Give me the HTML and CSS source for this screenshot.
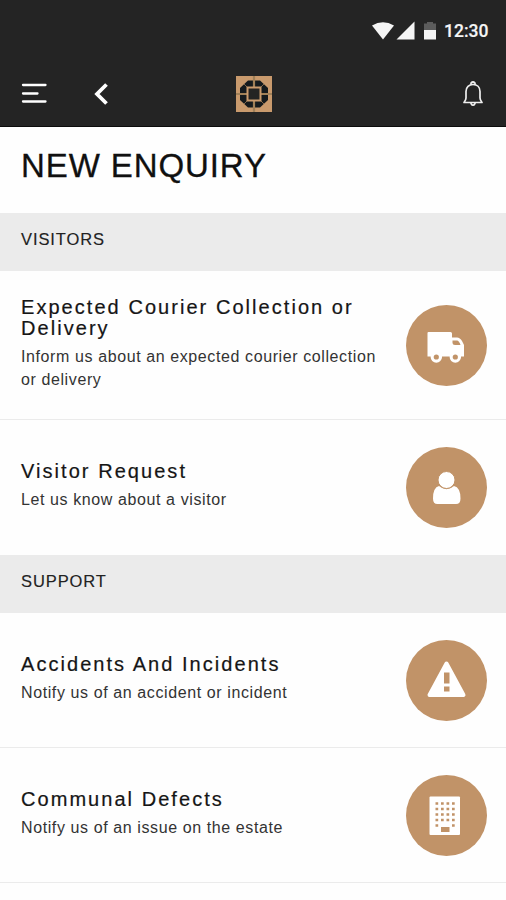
FILE: index.html
```html
<!DOCTYPE html>
<html lang="en">
<head>
<meta charset="utf-8">
<title>New Enquiry</title>
<link rel="stylesheet" href="styles.css">
</head>
<body>
<header class="top">
  <div class="status">
    <svg class="signals" width="70" height="22" viewBox="0 0 70 22">
      <path d="M1 5.500Q12 -1 23 5.500L12 19.500Z" fill="#f5f5f5"/>
      <path d="M43.500 1.500V19.500H25.500Z" fill="#f5f5f5"/>
      <path d="M53 10V3.500H56V2H62V3.500H65V10Z" fill="#5c5c5c"/>
      <path d="M53 10H65V19.500H53Z" fill="#f5f5f5"/>
    </svg>
    <span class="clock">12:30</span>
  </div>
  <nav class="bar">
    <svg class="menu" width="26" height="22" viewBox="0 0 26 22"><path d="M2 2H24.500M2 10.500H16.500M2 18.500H24.500" stroke="#fff" stroke-width="2.300" stroke-linecap="round"/></svg>
    <svg class="back" width="16" height="24" viewBox="0 0 16 24"><path d="M13.500 2.500L4 12L13.500 21.500" fill="none" stroke="#fff" stroke-width="3.800"/></svg>
    <svg class="logo" width="36" height="36" viewBox="0 0 36 36">
      <rect width="36" height="36" fill="#c99a6d"/>
      <path d="M12 4.500H24L32 12V24L24 31.500H12L4 24V12Z" fill="#151a1d"/>
      <path d="M18 0V36M0 18H36" stroke="#a08058" stroke-width="2.200"/>
      <path d="M8 8L13 13M28 8L23 13M8 28L13 23M28 28L23 23" stroke="#80664a" stroke-width="1"/>
      <rect x="11.500" y="11.500" width="13" height="13" fill="#242423" stroke="#c99a6d" stroke-width="2"/>
    </svg>
    <svg class="bell" width="22" height="28" viewBox="0 0 22 28">
      <g fill="none" stroke="#eee" stroke-width="1.700" stroke-linejoin="round" stroke-linecap="round">
        <path d="M9 4.500V3Q11 1 13 3V4.500M2 22.500Q4 20 4 18V11.500C4 7 7 4.500 11 4.500S18 7 18 11.500V18Q18 20 20 22.500Z"/>
        <path d="M9 23.500Q11 27 13 23.500"/>
      </g>
    </svg>
  </nav>
</header>
<main>
  <h1>NEW ENQUIRY</h1>
  <h2>VISITORS</h2>
  <article class="item tall">
    <div class="copy"><h3>Expected Courier Collection or Delivery</h3><p>Inform us about an expected courier collection or delivery</p></div>
    <svg class="badge" viewBox="0 0 81 81">
      <circle cx="40.500" cy="40.500" r="40.500" fill="#c19368"/>
      <path fill="#fff" d="M22.500 27H44.500Q46 27 46 28.500V32.500H51Q54 32.500 56 36L58 40V51.500H55A5.500 5.500 0 0 1 44.500 51.500H36A5.500 5.500 0 0 1 25.500 51.500H21.500V28Q21.500 27 22.500 27Z"/>
      <path fill="#c19368" d="M46.500 35.500H51Q53 35.500 54.500 40H49Q46.500 40 46.500 38Z"/>
      <circle cx="30.300" cy="52" r="5.700" fill="#fff"/><circle cx="49.300" cy="52" r="5.700" fill="#fff"/>
      <circle cx="30.300" cy="52" r="2.600" fill="#c19368"/><circle cx="49.300" cy="52" r="2.600" fill="#c19368"/>
    </svg>
  </article>
  <article class="item last">
    <div class="copy"><h3>Visitor Request</h3><p>Let us know about a visitor</p></div>
    <svg class="badge" viewBox="0 0 81 81">
      <circle cx="40.500" cy="40.500" r="40.500" fill="#c19368"/>
      <path fill="#fff" d="M33 39Q40.500 45.500 48 39Q54.500 40.500 54.500 51.500Q54.500 57 50 57H31.500Q27 57 27 51.500Q27 40.500 33 39Z"/>
      <circle cx="40.500" cy="33" r="8.500" fill="#fff" stroke="#c19368" stroke-width="1"/>
    </svg>
  </article>
  <h2>SUPPORT</h2>
  <article class="item">
    <div class="copy"><h3>Accidents And Incidents</h3><p>Notify us of an accident or incident</p></div>
    <svg class="badge" viewBox="0 0 81 81">
      <circle cx="40.500" cy="40.500" r="40.500" fill="#c19368"/>
      <path d="M40.500 23.500L57.500 55H23.500Z" fill="#fff" stroke="#fff" stroke-width="4" stroke-linejoin="round"/>
      <path d="M38 32.500H43.500V43.500H38ZM38 46.500H43.500V51.500H38Z" fill="#c19368"/>
    </svg>
  </article>
  <article class="item">
    <div class="copy"><h3>Communal Defects</h3><p>Notify us of an issue on the estate</p></div>
    <svg class="badge" viewBox="0 0 81 81">
      <circle cx="40.500" cy="40.500" r="40.500" fill="#c19368"/>
      <rect x="23.500" y="21.500" width="30.500" height="38.500" rx="1" fill="#fff"/>
      <path d="M29.500 28.500H49.500M29.500 34H49.500M29.500 39.500H49.500M29.500 45H49.500" stroke="#c19368" stroke-width="2.700" stroke-dasharray="2.700 2.800"/>
      <path d="M29.500 50.500H32.200M46 50.500H48.700" stroke="#c19368" stroke-width="2.700"/>
      <rect x="35" y="52" width="8.500" height="5" fill="#c19368"/>
    </svg>
  </article>
</main>
</body>
</html>
```
FILE: styles.css
```css
* { box-sizing: border-box; }
body { margin: 0; height: 900px; overflow: hidden; background: #fefefe; color: #151515; font-family: "Liberation Sans", Arial, sans-serif; }
h1, h2, h3, p { margin: 0; font-weight: 400; }
svg { display: block; flex: none; }
.top { height: 127px; background: #242424; border-bottom: 1px solid #0c0c0c; }
.status { height: 60px; padding-top: 1px; display: flex; align-items: center; justify-content: flex-end; padding-right: 17px; gap: 3px; }
.clock { width: 45px; color: #f5f5f5; font: 500 17.5px/22px Roboto, sans-serif; -webkit-text-stroke: .2px #f5f5f5; white-space: nowrap; }
.bar { height: 67px; display: flex; align-items: center; padding: 0 22px 0 21px; }
.back { margin-left: 46px; }
.logo { margin-left: 127px; }
.bell { margin-left: auto; }
h1 { height: 86px; padding: 20px 0 0 21px; font-size: 33px; line-height: 38px; letter-spacing: .9px; color: #101010; -webkit-text-stroke: .3px #101010; }
h2 { height: 58px; padding: 15.5px 0 0 21px; background: #ebebeb; font-size: 16.5px; line-height: 20px; letter-spacing: .9px; color: #222; -webkit-text-stroke: .15px #222; }
.item { height: 135px; padding: 0 19.5px 0 21px; display: flex; align-items: center; justify-content: space-between; border-bottom: 1.5px solid #ebebeb; }
.item.tall { height: 149px; }
.item.last { border-bottom: 0; }
.copy { width: 370px; padding-bottom: 3px; }
.last .copy { padding-bottom: 4px; }
h3 { font-size: 20px; line-height: 21px; letter-spacing: 2.05px; -webkit-text-stroke: .2px #151515; }
p { margin-top: 6px; font-size: 16px; line-height: 23px; letter-spacing: .6px; color: #333; }
.badge { width: 81px; height: 81px; }
```
